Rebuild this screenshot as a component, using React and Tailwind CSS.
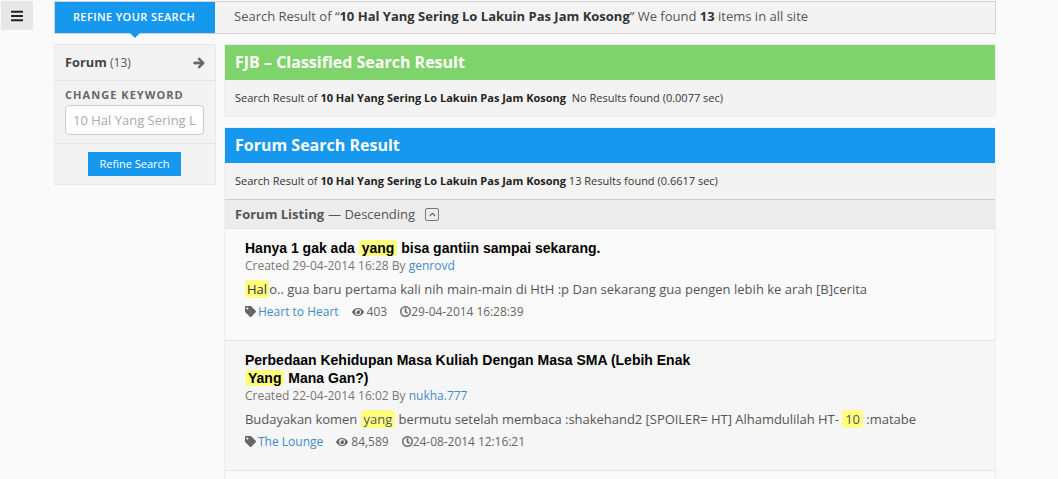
import { FaArrowRight, FaBars, FaChevronUp, FaEye, FaRegClock, FaTag } from "react-icons/fa";

const Mark = ({ children }) => (
  <span className="bg-[#ffff80] rounded-[3px] px-[3px] py-0">{children}</span>
);

function ResultHeader({ title, color, body }) {
  return (
    <section className="border border-[#eeeeee] bg-[#f3f3f3]">
      <h2 className={`h-[35px] pl-[10px] pb-[2px] flex items-center text-white font-bold text-[16px] ${color}`}>{title}</h2>
      <p className="h-[36px] pl-[10px] flex items-center text-[11px] text-[#333] whitespace-pre">{body}</p>
    </section>
  );
}

function Meta({ tag, views, date }) {
  return (
    <div className="flex items-center text-[12px] text-[#666] h-[17px]">
      <FaTag className="w-[11px] h-[11px] mr-[2px]" />
      <a className="text-[#428bca]">{tag}</a>
      <FaEye className="w-[12px] h-[12px] mr-[3px] ml-[13px]" />
      <span>{views}</span>
      <FaRegClock className="w-[11px] h-[11px] ml-[13px] stroke-[20px]" />
      <span className="tracking-[-0.05px]">{date}</span>
    </div>
  );
}

export default function App() {
  return (
    <div className="h-[479px] w-[1058px] overflow-hidden bg-[#fafafa] flex font-['Open_Sans',sans-serif] text-[#555]">
      <div className="w-[54px] shrink-0 pt-[1px] pl-[1px]">
        <button className="w-[32px] h-[29px] bg-[#e7e7e7] flex items-center justify-center text-[#222]">
          <FaBars className="w-[12px] h-[14px]" />
        </button>
      </div>

      <div className="w-[942px] shrink-0 pt-[1px]">
        <div className="relative h-[33px] border border-[#d2d2d2] bg-[#f3f3f3] flex items-center">
          <div className="relative w-[160px] h-full pr-[2px] bg-[#1598ee] text-white text-[11px] font-semibold tracking-[0.4px] flex items-center justify-center">
            REFINE YOUR SEARCH
            <span className="absolute left-[75px] top-full w-0 h-0 border-x-[5px] border-x-transparent border-t-[5px] border-t-[#1598ee]" />
          </div>
          <p className="ml-[19px] -mt-[2px] text-[13px] whitespace-pre">
            Search Result of “<b className="text-[#333]">10 Hal Yang Sering Lo Lakuin Pas Jam Kosong</b>” We found <b className="text-[#333]">13</b> items in all site
          </p>
        </div>

        <div className="flex mt-[10px] gap-[8px]">
          <aside className="w-[162px] h-[141px] shrink-0 border border-[#e8e8e8] bg-[#f3f3f3]">
            <div className="h-[36px] px-[10px] flex items-center justify-between border-b border-[#e3e3e3] text-[12.8px]">
              <span><b className="text-[#444]">Forum</b> <span className="text-[12px]">(13)</span></span>
              <FaArrowRight className="w-[12px] h-[12px] text-[#666] stroke-[40px]" />
            </div>
            <div className="h-[63px] px-[10px] pt-[6px] border-b border-[#e3e3e3]">
              <div className="text-[11px] font-bold tracking-[1.05px] text-[#666] leading-[15px]">CHANGE KEYWORD</div>
              <input
                readOnly
                value="10 Hal Yang Sering Lo Lakuin Pas Jam Kosong"
                className="mt-[3px] w-[139px] h-[30px] px-[7px] bg-white border border-[#ccc] rounded-[4px] text-[13px] text-[#aaa] outline-none"
              />
            </div>
            <div className="flex justify-center pt-[8px] pr-[1px]">
              <button className="w-[93px] h-[24px] bg-[#1598ee] text-white text-[11px]">Refine Search</button>
            </div>
          </aside>

          <main className="w-[772px] shrink-0">
            <ResultHeader
              title="FJB – Classified Search Result"
              color="bg-[#7fd36b]"
              body={<>Search Result of <b className="text-[#222]">10 Hal Yang Sering Lo Lakuin Pas Jam Kosong</b>  No Results found (0.0077 sec)</>}
            />

            <div className="mt-[10px] border-x border-[#eeeeee]">
              <section className="border-t border-[#eeeeee] bg-[#f3f3f3]">
                <h2 className="h-[35px] pl-[10px] pb-[2px] flex items-center text-white font-bold text-[16px] bg-[#1598ee]">Forum Search Result</h2>
                <p className="h-[36px] pl-[10px] flex items-center text-[11px] text-[#333] whitespace-pre">
                  Search Result of <b className="text-[#222]">10 Hal Yang Sering Lo Lakuin Pas Jam Kosong</b> 13 Results found (0.6617 sec)
                </p>
              </section>

              <div className="h-[30px] pl-[10px] flex items-center border-y border-t-[#cccccc] border-b-[#e3e3e3] bg-[#ececec] text-[13px]">
                <b className="text-[#555] pt-[2px]">Forum Listing</b>
                <span className="ml-[4px] pt-[2px]">— Descending</span>
                <span className="ml-[10px] w-[14px] h-[13px] border border-[#777] rounded-[2px] flex items-center justify-center text-[#555]">
                  <FaChevronUp className="w-[7px] h-[7px]" />
                </span>
              </div>

              <article className="h-[112px] pl-[20px] pt-[10px] border-b border-[#e3e3e3] bg-[#fafafa]">
                <h3 className="font-['Liberation_Sans',sans-serif] font-bold text-[14px] leading-[18px] text-black">
                  Hanya 1 gak ada <Mark>yang</Mark> bisa gantiin sampai sekarang.
                </h3>
                <div className="text-[12px] leading-[17px] text-[#777]">Created 29-04-2014 16:28 By <a className="text-[#428bca]">genrovd</a></div>
                <p className="mt-[6px] text-[13px] tracking-[0.02px] leading-[18px] text-[#555]"><span className="bg-[#ffff80] text-[#333] rounded-[3px] px-[2px]">Hal</span>o.. gua baru pertama kali nih main-main di HtH :p Dan sekarang gua pengen lebih ke arah [B]cerita</p>
                <div className="mt-[5px]">
                  <Meta tag="Heart to Heart" views="403" date="29-04-2014 16:28:39" />
                </div>
              </article>

              <article className="h-[130px] pl-[20px] pt-[10px] border-b border-[#e3e3e3] bg-[#f6f6f6]">
                <h3 className="w-[480px] font-['Liberation_Sans',sans-serif] font-bold text-[14px] leading-[18px] text-black">
                  Perbedaan Kehidupan Masa Kuliah Dengan Masa SMA (Lebih Enak <Mark>Yang</Mark> Mana Gan?)
                </h3>
                <div className="text-[12px] leading-[17px] text-[#777]">Created 22-04-2014 16:02 By <a className="text-[#428bca]">nukha.777</a></div>
                <p className="mt-[6px] text-[13px] tracking-[-0.03px] leading-[18px] text-[#555]">Budayakan komen <Mark>yang</Mark> bermutu setelah membaca :shakehand2 [SPOILER= HT] Alhamdulilah HT- <Mark>10</Mark> :matabe</p>
                <div className="mt-[5px]">
                  <Meta tag="The Lounge" views="84,589" date="24-08-2014 12:16:21" />
                </div>
              </article>

              <div className="h-[20px] bg-[#fafafa]" />
            </div>
          </main>
        </div>
      </div>
    </div>
  );
}
